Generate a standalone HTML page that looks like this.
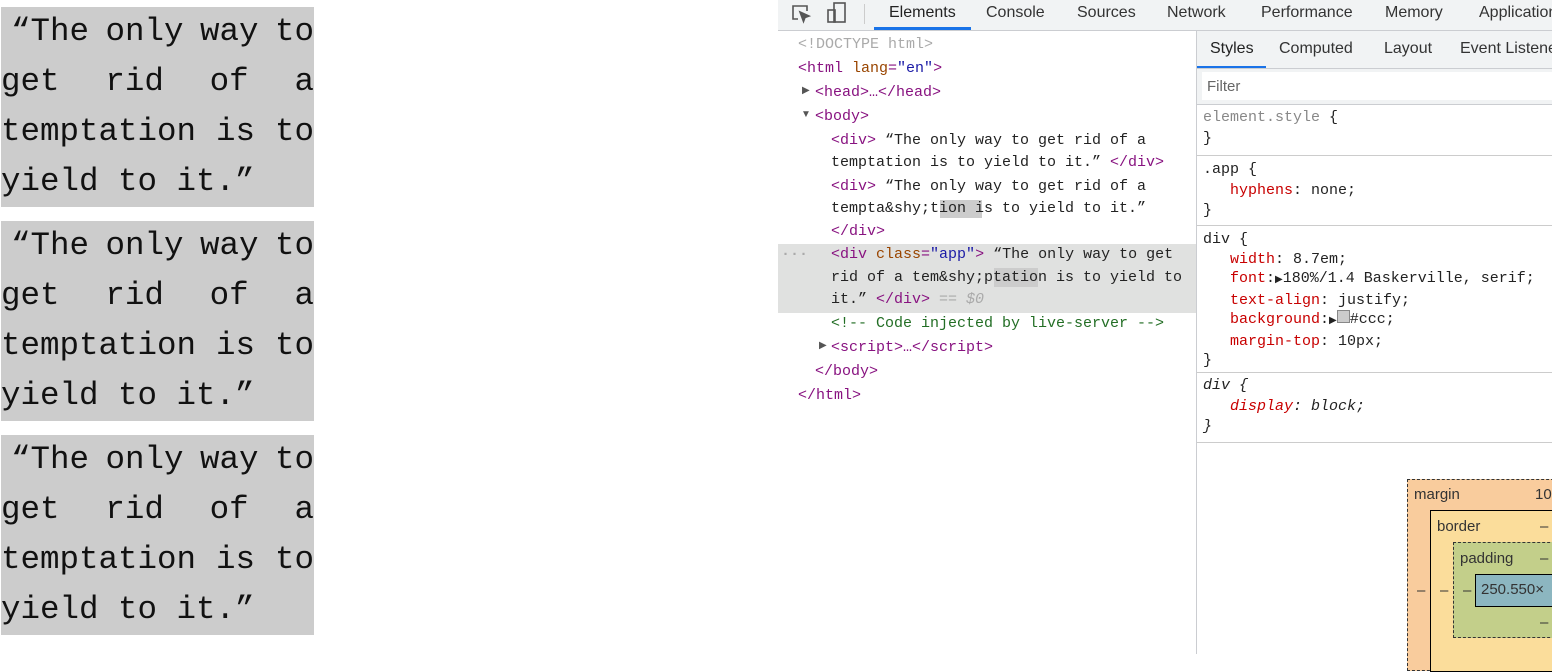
<!DOCTYPE html>
<html><head><style>
body{margin:0;width:1552px;height:654px;overflow:hidden;background:#fff;position:relative;font-family:"Liberation Sans",sans-serif}
.q{position:absolute;left:1px;width:313px;height:200px;background:#ccc;font-family:"Liberation Mono","Noto Serif CJK SC",monospace;font-size:32.5px;line-height:50px;color:#111}
.q .l{display:flex;justify-content:space-between;height:50px;white-space:nowrap}
.q .z{height:50px;white-space:pre}
.m{font-family:"Liberation Mono",monospace;font-size:15px;white-space:pre;position:absolute;color:#222}
.e{position:absolute;font-family:"Liberation Mono",monospace;font-size:15px;white-space:pre;color:#222;line-height:20px}
.t{color:#881280}.a{color:#994500}.v{color:#1a1aa6}.c{color:#236e25}.g{color:#aaa}
.tb{position:absolute;left:778px;top:0;width:774px;height:30px;background:#f1f3f4;border-bottom:1px solid #cbcdd1}
.tab{position:absolute;top:4px;font-size:16px;color:#333;white-space:nowrap}
.p{color:#c80000}
.ar{position:absolute;font-size:10px;color:#555}
</style></head><body>
<div class="q" style="top:7px"><div class="l" style="padding-left:10px"><span>“The</span><span>only</span><span>way</span><span>to</span></div><div class="l"><span>get</span><span>rid</span><span>of</span><span>a</span></div><div class="l"><span>temptation</span><span>is</span><span>to</span></div><div class="z">yield to it.”</div></div>
<div class="q" style="top:221px"><div class="l" style="padding-left:10px"><span>“The</span><span>only</span><span>way</span><span>to</span></div><div class="l"><span>get</span><span>rid</span><span>of</span><span>a</span></div><div class="l"><span>temptation</span><span>is</span><span>to</span></div><div class="z">yield to it.”</div></div>
<div class="q" style="top:435px"><div class="l" style="padding-left:10px"><span>“The</span><span>only</span><span>way</span><span>to</span></div><div class="l"><span>get</span><span>rid</span><span>of</span><span>a</span></div><div class="l"><span>temptation</span><span>is</span><span>to</span></div><div class="z">yield to it.”</div></div>

<div class="tb">
<svg style="position:absolute;left:12px;top:3px" width="22" height="22" viewBox="0 0 22 22" fill="none" stroke="#555" stroke-width="1.6"><path d="M8 16H3V3h14v5"/><path d="M10 9l9 4-4 1.5-1.5 4z" fill="#555"/></svg>
<svg style="position:absolute;left:48px;top:1px" width="22" height="24" viewBox="0 0 22 24" fill="none" stroke="#555" stroke-width="1.6"><rect x="8" y="2" width="11" height="19"/><rect x="2" y="9" width="7" height="12"/></svg>
<div style="position:absolute;left:86px;top:4px;width:1px;height:20px;background:#ccc"></div>
<div class="tab" style="left:111px;color:#222">Elements</div>
<div style="position:absolute;left:96px;top:27px;width:97px;height:3px;background:#1a73e8"></div>
<div class="tab" style="left:208px">Console</div>
<div class="tab" style="left:299px">Sources</div>
<div class="tab" style="left:389px">Network</div>
<div class="tab" style="left:483px">Performance</div>
<div class="tab" style="left:607px">Memory</div>
<div class="tab" style="left:701px">Application</div>
</div>

<div style="position:absolute;left:778px;top:244px;width:418px;height:69px;background:#e0e1e0"></div>
<div style="position:absolute;left:940px;top:200px;width:42px;height:18px;background:#ccc"></div>
<div style="position:absolute;left:994px;top:268px;width:44px;height:19px;background:#ccc"></div>
<div class="e g" style="left:781px;top:245px;font-weight:bold">···</div>

<div class="e g" style="left:798px;top:35px">&lt;!DOCTYPE html&gt;</div>
<div class="e t" style="left:798px;top:59px">&lt;html <span class="a">lang</span>=<span class="v">"en"</span>&gt;</div>
<div class="ar" style="left:802px;top:85px">▶</div>
<div class="e t" style="left:815px;top:83px">&lt;head&gt;…&lt;/head&gt;</div>
<div class="ar" style="left:801px;top:109px">▼</div>
<div class="e t" style="left:815px;top:107px">&lt;body&gt;</div>
<div class="e" style="left:831px;top:131px"><span class="t">&lt;div&gt;</span> “The only way to get rid of a</div>
<div class="e" style="left:831px;top:153px">temptation is to yield to it.” <span class="t">&lt;/div&gt;</span></div>
<div class="e" style="left:831px;top:177px"><span class="t">&lt;div&gt;</span> “The only way to get rid of a</div>
<div class="e" style="left:831px;top:199px">tempta&amp;shy;tion is to yield to it.”</div>
<div class="e t" style="left:831px;top:222px">&lt;/div&gt;</div>
<div class="e" style="left:831px;top:245px"><span class="t">&lt;div <span class="a">class</span>=<span class="v">"app"</span>&gt;</span> “The only way to get</div>
<div class="e" style="left:831px;top:268px">rid of a tem&amp;shy;ptation is to yield to</div>
<div class="e" style="left:831px;top:290px">it.” <span class="t">&lt;/div&gt;</span> <span class="g"><i>== $0</i></span></div>
<div class="e c" style="left:831px;top:314px">&lt;!-- Code injected by live-server --&gt;</div>
<div class="ar" style="left:819px;top:340px">▶</div>
<div class="e t" style="left:831px;top:338px">&lt;script&gt;…&lt;/script&gt;</div>
<div class="e t" style="left:815px;top:362px">&lt;/body&gt;</div>
<div class="e t" style="left:798px;top:386px">&lt;/html&gt;</div>

<div style="position:absolute;left:1196px;top:31px;width:1px;height:623px;background:#cbcdd1"></div>
<div style="position:absolute;left:1197px;top:31px;width:355px;height:37px;background:#f1f3f4;border-bottom:1px solid #cbcdd1"></div>
<div class="tab" style="left:1210px;top:40px;color:#222">Styles</div>
<div style="position:absolute;left:1197px;top:66px;width:69px;height:2px;background:#1a73e8"></div>
<div class="tab" style="left:1279px;top:40px">Computed</div>
<div class="tab" style="left:1384px;top:40px">Layout</div>
<div class="tab" style="left:1460px;top:40px">Event Listeners</div>
<div style="position:absolute;left:1197px;top:69px;width:355px;height:35px;background:#f1f3f4;border-bottom:1px solid #cbcdd1"></div>
<div style="position:absolute;left:1202px;top:72px;width:350px;height:28px;background:#fff"></div>
<div class="tab" style="left:1207px;top:78px;color:#666;font-size:15px">Filter</div>
<div class="m" style="left:1203px;top:108px;line-height:20.5px"><span style="color:#888">element.style</span> {
}</div>
<div style="position:absolute;left:1197px;top:155px;width:355px;height:1px;background:#ccc"></div>
<div class="m" style="left:1203px;top:160px;line-height:20.5px">.app {
   <span class="p">hyphens</span>: none;
}</div>
<div style="position:absolute;left:1197px;top:225px;width:355px;height:1px;background:#ccc"></div>
<div class="m" style="left:1203px;top:230px;line-height:19.5px">div {
   <span class="p">width</span>: 8.7em;
   <span class="p">font</span>:<span style="font-size:10px">▶</span>180%/1.4 Baskerville, serif;
   <span class="p">text-align</span>: justify;
   <span class="p">background</span>:<span style="font-size:10px">▶</span><span style="display:inline-block;width:11px;height:11px;background:#ccc;border:1px solid #888"></span>#ccc;
   <span class="p">margin-top</span>: 10px;
}</div>
<div style="position:absolute;left:1197px;top:372px;width:355px;height:1px;background:#ccc"></div>
<div class="m" style="left:1203px;top:376px;line-height:20.5px"><i>div {
   <span class="p">display</span>: block;
}</i></div>
<div style="position:absolute;left:1197px;top:442px;width:355px;height:1px;background:#ccc"></div>

<div style="position:absolute;left:1407px;top:479px;width:160px;height:190px;background:#f9cc9d;border:1px dashed #333"></div>
<div style="position:absolute;left:1430px;top:510px;width:140px;height:160px;background:#fbdd9b;border:1px solid #000"></div>
<div style="position:absolute;left:1453px;top:542px;width:110px;height:94px;background:#c3cf8a;border:1px dashed #333"></div>
<div style="position:absolute;left:1475px;top:574px;width:90px;height:31px;background:#8cb6c0;border:1px solid #000"></div>
<div class="tab" style="left:1414px;top:486px;font-size:15px">margin</div>
<div class="tab" style="left:1535px;top:486px;font-size:15px">10</div>
<div class="tab" style="left:1437px;top:518px;font-size:15px">border</div>
<div class="tab" style="left:1540px;top:518px;font-size:15px">–</div>
<div class="tab" style="left:1460px;top:550px;font-size:15px">padding</div>
<div class="tab" style="left:1540px;top:550px;font-size:15px">–</div>
<div class="tab" style="left:1481px;top:581px;font-size:15px">250.550×</div>
<div class="tab" style="left:1417px;top:582px;font-size:15px">–</div>
<div class="tab" style="left:1440px;top:582px;font-size:15px">–</div>
<div class="tab" style="left:1463px;top:582px;font-size:15px">–</div>
<div class="tab" style="left:1540px;top:614px;font-size:15px">–</div>
</body></html>
